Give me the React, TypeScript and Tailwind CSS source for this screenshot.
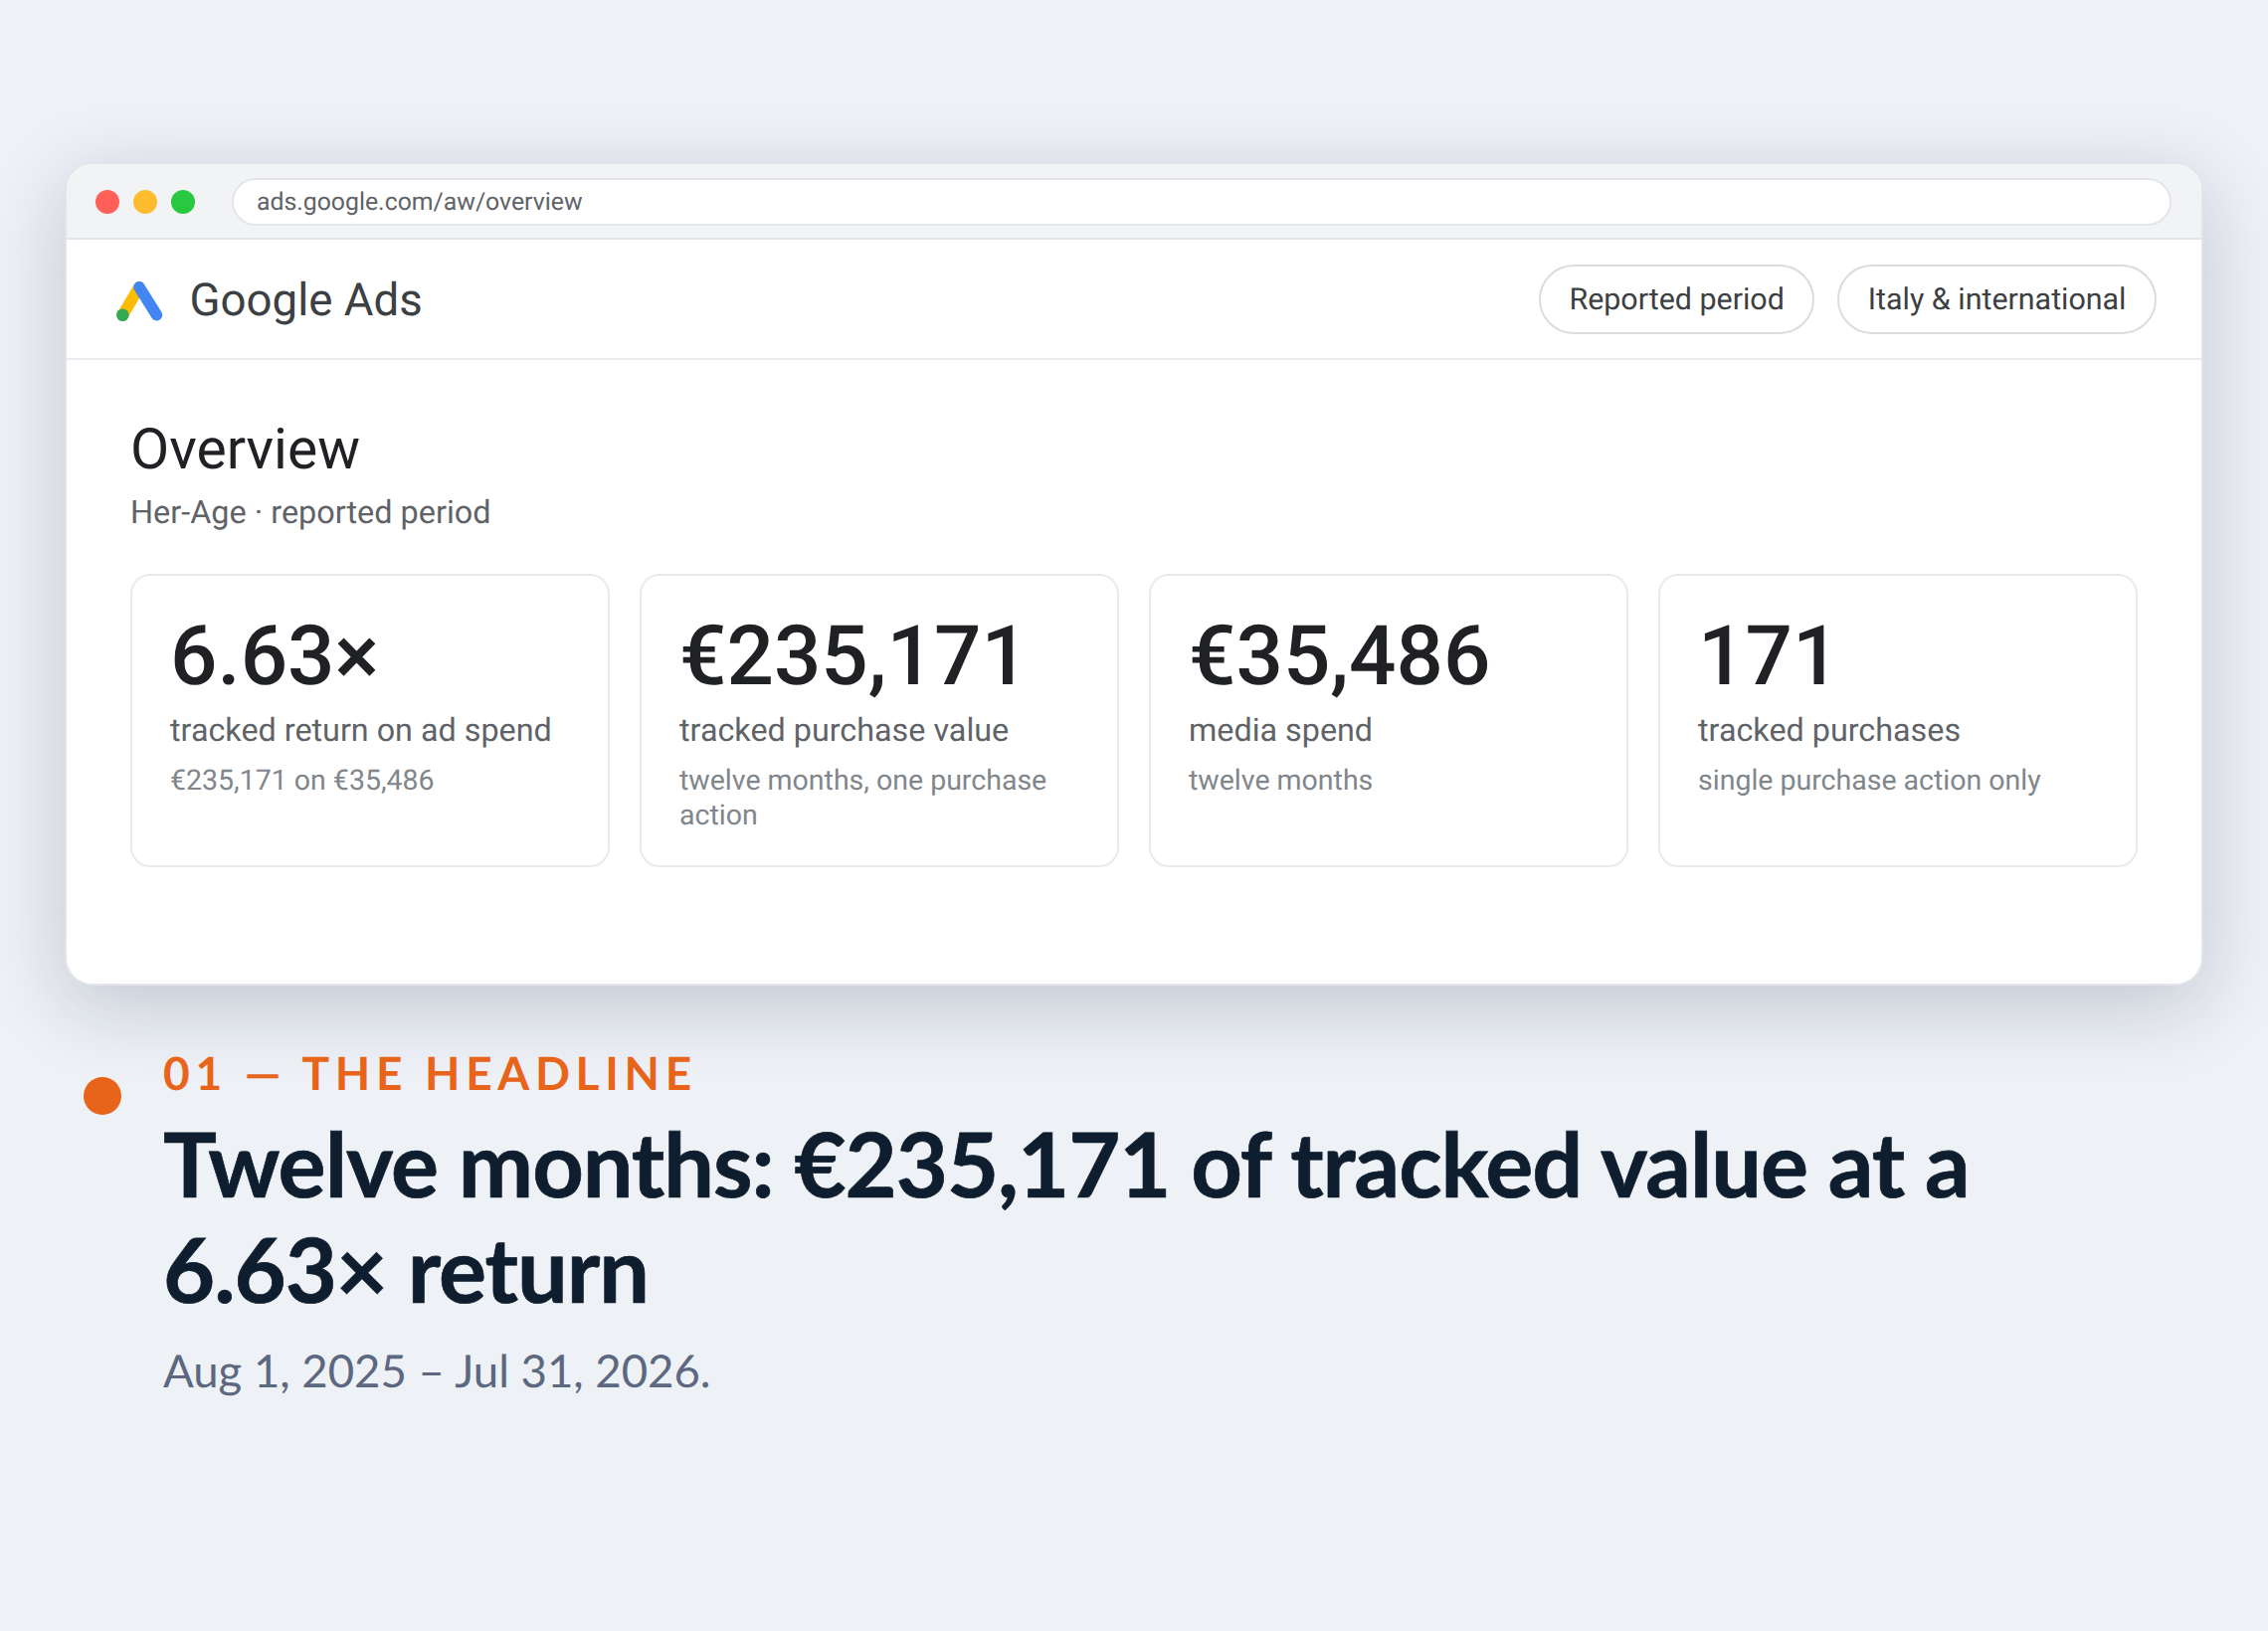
const stats = [
  { value: "6.63×", label: "tracked return on ad spend", note: "€235,171 on €35,486" },
  { value: "€235,171", label: "tracked purchase value", note: "twelve months, one purchase action" },
  { value: "€35,486", label: "media spend", note: "twelve months" },
  { value: "171", label: "tracked purchases", note: "single purchase action only" },
];

function AdsLogo() {
  return (
    <svg width="54" height="48" viewBox="0 0 54 48" fill="none">
      <line x1="25" y1="9.7" x2="8.3" y2="37.7" stroke="#fbbc04" strokeWidth="11.5" strokeLinecap="round" />
      <line x1="25" y1="9.7" x2="42.5" y2="37.7" stroke="#4285f4" strokeWidth="11.5" strokeLinecap="round" />
      <circle cx="8.3" cy="37.7" r="6.3" fill="#34a853" />
    </svg>
  );
}

export default function App() {
  return (
    <div className="min-h-[1640px] bg-[#eef1f6] pt-[163px] px-[65px] font-['Roboto',sans-serif] [text-rendering:geometricPrecision]">
      {/* Browser window */}
      <div className="w-[2150px] h-[828px] rounded-[28px] border-2 border-[#e3e5ea] bg-white overflow-hidden shadow-[0_20px_80px_rgba(15,30,60,0.2)]">
        <div className="h-[76px] pt-[2px] bg-[#f1f3f5] border-b-2 border-[#e3e5ea] flex items-center gap-[37px] pl-[29px] pr-[30px]">
          <div className="flex gap-[14px]">
            <span className="w-[24px] h-[24px] rounded-full bg-[#ff5f57]" />
            <span className="w-[24px] h-[24px] rounded-full bg-[#febc2e]" />
            <span className="w-[24px] h-[24px] rounded-full bg-[#28c840]" />
          </div>
          <div className="flex-1 h-[48px] pt-[1px] rounded-full bg-white border-2 border-[#e3e5ea] flex items-center px-[23px] text-[24.8px] text-[#5f6368]">
            ads.google.com/aw/overview
          </div>
        </div>

        <div className="h-[121px] border-b-2 border-[#e9ebef] flex items-center justify-between pl-[48px] pr-[45px]">
          <div className="flex items-center gap-[21.5px] mt-[5px]">
            <AdsLogo />
            <span className="text-[45.6px] text-[#3c4043]">Google Ads</span>
          </div>
          <div className="flex gap-[23px]">
            <span className="h-[70px] pt-[2px] flex items-center rounded-full border-2 border-[#dadce0] px-[28.5px] text-[30.4px] text-[#3c4043]">Reported period</span>
            <span className="h-[70px] pt-[2px] flex items-center rounded-full border-2 border-[#dadce0] px-[28.5px] text-[30.4px] text-[#3c4043]">Italy &amp; international</span>
          </div>
        </div>

        <div className="px-[64px] pt-[57px]">
          <h1 className="text-[57px] leading-[66px] font-normal text-[#202124]">Overview</h1>
          <p className="mt-[10px] text-[32.4px] leading-[40px] text-[#5f6368]">Her-Age · reported period</p>
          <div className="mt-[42px] grid grid-cols-4 gap-[30px]">
            {stats.map((s) => (
              <div key={s.label} className="h-[295px] rounded-[20px] border-2 border-[#e8eaed] pt-[37px] px-[38px]">
                <div className="text-[83.5px] leading-[90px] font-medium text-[#202124]">{s.value}</div>
                <div className="mt-[7px] text-[32.3px] leading-[42px] text-[#5f6368]">{s.label}</div>
                <div className="mt-[12px] text-[28.5px] leading-[35px] text-[#80868b]">{s.note}</div>
              </div>
            ))}
          </div>
        </div>
      </div>

      {/* Caption */}
      <div className="flex ml-[19px] mt-[60px] gap-[42px] font-['Lato',sans-serif]">
        <span className="mt-[32px] w-[38px] h-[38px] shrink-0 rounded-full bg-[#e8641b]" />
        <div className="flex-1 max-w-[1900px]">
          <div className="text-[46px] leading-[56px] font-bold tracking-[5.7px] text-[#e8641b]">01 — THE HEADLINE</div>
          <h2 className="mt-[10px] text-[90px] leading-[106px] font-bold tracking-[-1.05px] text-[#0f1e2e] [-webkit-text-stroke:0.7px_#0f1e2e]">
            Twelve months: €235,171 of tracked value at a 6.63× return
          </h2>
          <p className="mt-[19px] text-[45.5px] leading-[60px] text-[#5b6880]">Aug 1, 2025 – Jul 31, 2026.</p>
        </div>
      </div>
    </div>
  );
}
